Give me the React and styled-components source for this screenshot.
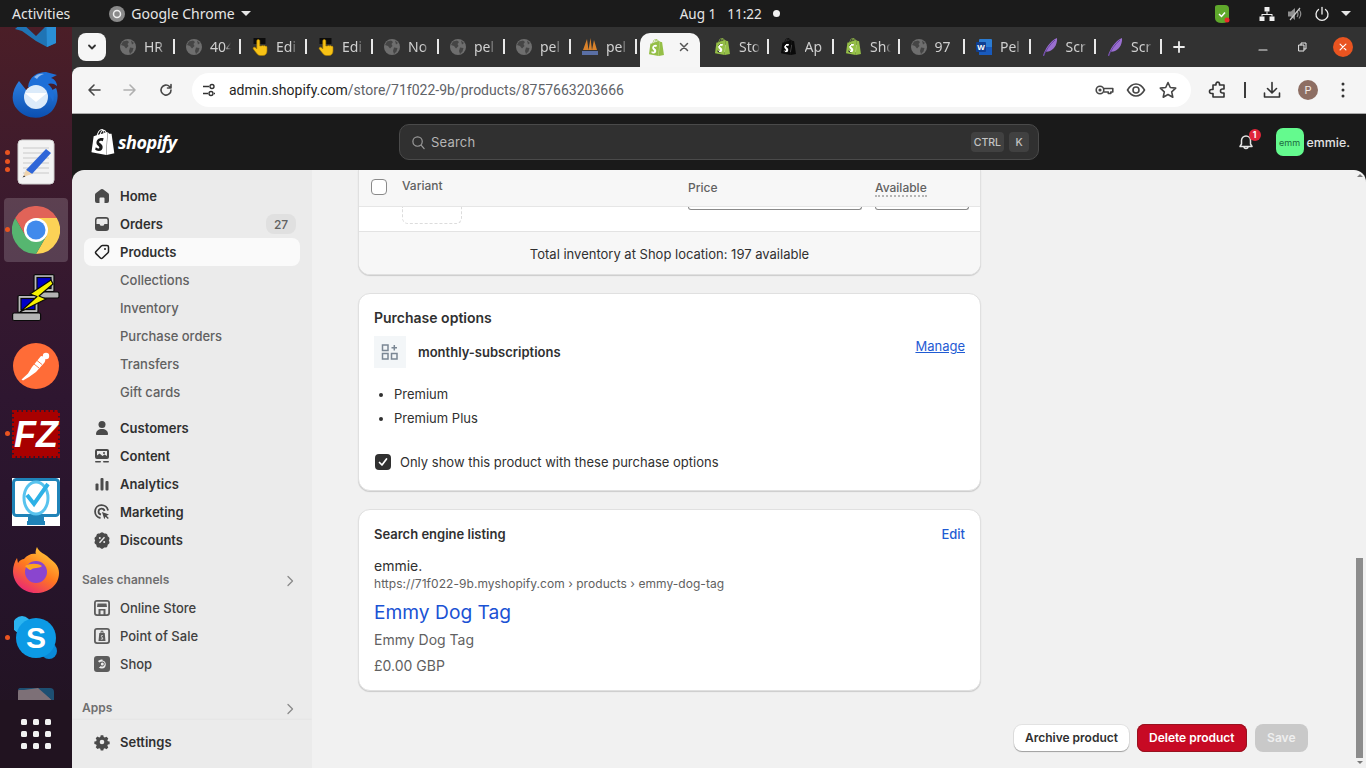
import React from "react";
import styled, { createGlobalStyle } from "styled-components";
import { SiShopify } from "react-icons/si";

const Global = createGlobalStyle`
  html, body { margin: 0; padding: 0; height: 100%; overflow: hidden; background: #1c1c1c; }
  #root { height: 100%; }
  * { box-sizing: border-box; }
`;

const Screen = styled.div`
  width: 1366px; height: 768px; display: flex; flex-direction: column; overflow: hidden;
  font-family: Inter, "Liberation Sans", sans-serif;
`;

/* ---------- GNOME top bar ---------- */
const TopBar = styled.header`
  height: 27px; flex: none; background: #1b1b1b; color: #e6e6e6; display: flex; align-items: center;
  font: 400 14px "Noto Sans", sans-serif; padding-left: 12px;
`;
const AppMenu = styled.div`
  display: flex; align-items: center; gap: 6px; margin-left: 39px;
`;
const Caret = styled.span`
  width: 0; height: 0; border-left: 5px solid transparent; border-right: 5px solid transparent;
  border-top: 5px solid #e6e6e6; margin-left: ${p => p.$ml || 0}px;
`;
const Clock = styled.div`
  margin-left: 429px; width: 100px; display: flex; align-items: center; justify-content: space-between; font-size: 13.5px;
`;
const Tray = styled.div`
  margin-left: auto; display: flex; align-items: center; padding-right: 15px;
`;
const TrayIcon = styled.span`
  display: flex; margin-left: ${p => p.$ml || 0}px;
`;
const ClockDot = styled.span`
  width: 7px; height: 7px; border-radius: 50%; background: #f2f2f2;
`;

/* ---------- Desktop ---------- */
const Desktop = styled.div`
  flex: 1; min-height: 0; display: flex;
`;
const Dock = styled.aside`
  width: 72px; flex: none; position: relative; overflow: hidden;
  background: linear-gradient(180deg, #4b1e27 0%, #3a1a2e 25%, #2e1630 50%, #26142a 75%, #201320 100%);
`;
const DockList = styled.div`
  margin-top: -35px; display: flex; flex-direction: column; align-items: center;
`;
const DockItem = styled.div`
  width: 72px; height: 68px; flex: none; position: relative; display: flex; align-items: center; justify-content: center;
`;
const ActiveTile = styled.span`
  position: absolute; left: 4px; top: 2px; width: 64px; height: 64px; border-radius: 4px; background: rgba(255,255,255,.17);
`;
const RunDot = styled.span`
  position: absolute; left: 5px; top: ${p => p.$top}px; width: 5px; height: 5px; border-radius: 50%; background: #e95420;
`;
const GridButton = styled.div`
  position: absolute; left: 0; bottom: 0; width: 72px; height: 68px; display: grid; grid-template-columns: repeat(3, 6px);
  gap: 6px; justify-content: center; align-content: center; background: #211320;
`;
const GridDot = styled.span`
  width: 6px; height: 6px; border-radius: 1.5px; background: #f2f2f2;
`;

/* ---------- Chrome ---------- */
const Browser = styled.div`
  flex: 1; min-width: 0; display: flex; flex-direction: column; background: #323232;
`;
const TabStrip = styled.div`
  height: 40px; flex: none; display: flex; align-items: flex-end; padding-left: 6px; background: #323232;
`;
const ExpandBtn = styled.div`
  width: 28px; height: 28px; margin-bottom: 6px; background: #f6f6f6; border-radius: 8px; display: flex; align-items: center; justify-content: center;
`;
const TabGroup = styled.div`
  display: flex; margin-left: 3px; align-self: stretch;
`;
const Tab = styled.div`
  width: ${p => p.$w}px; display: flex; align-items: center; padding: 0 0 1px 11px; gap: 8px; position: relative;
  color: #d0d0d0; font: 400 14px "Noto Sans", sans-serif;
  &::after {
    content: ""; position: absolute; right: 0; top: 12px; height: 15px; width: 2px; background: #e8e8e8;
  }
`;
const TabLabel = styled.span`
  width: 21px; overflow: hidden; white-space: nowrap;
  -webkit-mask-image: linear-gradient(90deg, #000 72%, transparent 100%);
  mask-image: linear-gradient(90deg, #000 72%, transparent 100%);
`;
const ActiveTab = styled.div`
  width: 60px; height: 34px; margin-left: 3px; background: #f6f6f6; border-radius: 10px 10px 0 0; display: flex; align-items: center;
  padding: 0 0 6px 8px; gap: 13px;
`;
const TabClose = styled.span`
  display: flex;
`;
const NewTab = styled.div`
  margin: 0 0 14px 11px; display: flex;
`;
const WinControls = styled.div`
  margin-left: auto; display: flex; align-items: center; align-self: center; padding: 0 13px 0 0;
`;
const WinBtn = styled.span`
  display: flex; margin-left: ${p => p.$ml}px;
`;
const WinClose = styled.span`
  width: 20px; height: 20px; margin-left: 26px; border-radius: 50%; background: #e95420; display: flex; align-items: center; justify-content: center;
`;
const Toolbar = styled.div`
  height: 47px; flex: none; background: #f5f5f5; border-radius: 8px 0 0 0; border-bottom: 1px solid #a9a9a9; display: flex; align-items: center; padding-left: 14px;
`;
const NavBtn = styled.span`
  width: 16px; height: 16px; display: flex; margin-right: ${p => p.$mr || 20}px;
`;
const Omnibox = styled.div`
  width: 999px; height: 34px; background: #fff; border-radius: 17px; display: flex; align-items: center; padding: 0 13px 0 9px;
`;
const TuneBtn = styled.span`
  width: 16px; display: flex; margin-right: 12px;
`;
const Url = styled.div`
  flex: 1; font: 400 14px Roboto, sans-serif; color: #5f6368;
`;
const UrlHost = styled.span`
  color: #1f1f1f;
`;
const OmniIcons = styled.div`
  display: flex; gap: 12px; align-items: center;
`;
const ToolIcons = styled.div`
  display: flex; align-items: center; margin-left: 17px;
`;
const ToolIcon = styled.span`
  display: flex; margin-right: ${p => p.$mr}px;
`;
const ToolSep = styled.span`
  width: 2px; height: 16px; background: #3c3c3c; margin-right: 16px;
`;
const ProfileDot = styled.span`
  width: 20px; height: 20px; border-radius: 50%; background: #8d6e63; color: #f3e9e4; font: 400 11px Roboto, sans-serif;
  display: flex; align-items: center; justify-content: center; margin-right: 23px;
`;

/* ---------- Shopify header ---------- */
const ShopHeader = styled.div`
  height: 56px; flex: none; background: #1a1a1a; display: flex; align-items: center; padding: 0 16px 0 18px;
`;
const Logo = styled.div`
  width: 309px; display: flex; align-items: center; gap: 2px; color: #fff; font: italic 700 18px "Open Sans", sans-serif; letter-spacing: -.5px;
`;
const SearchBar = styled.div`
  width: 640px; height: 36px; background: #303030; border: 1px solid #4a4a4a; border-radius: 10px; display: flex; align-items: center;
  padding: 0 9px 0 11px; color: #b5b5b5; font-size: 13px; gap: 5px;
`;
const SearchText = styled.span`
  flex: 1; letter-spacing: .2px;
`;
const Kbd = styled.span`
  height: 20px; padding: 0 3px; min-width: 20px; background: #414141; border-radius: 4px; display: flex; align-items: center; justify-content: center;
  font-size: 10.5px; font-weight: 500; color: #c4c4c4;
`;
const HeaderRight = styled.div`
  margin-left: auto; display: flex; align-items: center;
`;
const Bell = styled.div`
  position: relative; display: flex; margin-right: 21px;
`;
const BellBadge = styled.span`
  position: absolute; right: -6px; top: -4px; width: 12px; height: 12px; border-radius: 50%; background: #e0263a; color: #fff;
  font-size: 8.5px; font-weight: 700; display: flex; align-items: center; justify-content: center;
`;
const Avatar = styled.span`
  width: 28px; height: 28px; border-radius: 7px; background: #64fa8e; color: #1c6b3e; font-size: 9px; display: flex; align-items: center; justify-content: center;
`;
const StoreName = styled.span`
  margin-left: 3px; color: #e3e3e3; font-size: 12.4px; font-weight: 500;
`;

/* ---------- Admin frame ---------- */
const Frame = styled.div`
  flex: 1; min-height: 0; display: flex; background: #1a1a1a;
`;
const Sidebar = styled.nav`
  width: 240px; flex: none; background: #ebebeb; border-radius: 12px 0 0 0; display: flex; flex-direction: column; overflow: hidden;
`;
const NavScroll = styled.div`
  flex: 1; min-height: 0; padding: 12px 12px 0; display: flex; flex-direction: column; overflow: hidden;
`;
const NavFooter = styled.div`
  height: 48px; flex: none; padding: 8px 12px 0; box-shadow: 0 -1px 2px rgba(0,0,0,.03);
`;
const NavItem = styled.div`
  height: 28px; flex: none; display: flex; align-items: center; border-radius: 8px; padding: 0 8px; gap: 8px;
  font-size: 13px; font-weight: ${p => (p.$sub ? 500 : p.$channel ? 550 : 600)};
  color: ${p => (p.$sub ? "#616161" : p.$channel ? "#404040" : "#303030")};
  background: ${p => (p.$active ? "#fafafa" : "transparent")};
  margin-top: ${p => p.$mt || 0}px;
`;
const NavIcon = styled.span`
  width: 20px; height: 20px; flex: none; display: flex; align-items: center; justify-content: center;
`;
const NavLabel = styled.span`
  flex: 1;
`;
const Count = styled.span`
  height: 20px; min-width: 30px; border-radius: 8px; background: #e0e0e0; color: #616161; font-size: 12px; font-weight: 500;
  display: flex; align-items: center; justify-content: center; margin-right: -4px;
`;
const SectionHead = styled.div`
  height: 20px; flex: none; display: flex; align-items: center; justify-content: space-between; margin: ${p => p.$mt}px 0 5px -2px;
  font-size: 12px; font-weight: 600; color: #6f6f6f;
`;
const Chevron = styled.span`
  display: flex; margin: 3px 4px 0 0;
`;

/* ---------- Main column ---------- */
const Main = styled.main`
  flex: 1; min-width: 0; background: #f1f1f1; border-radius: 0 12px 0 0; display: flex; overflow: hidden;
`;
const Column = styled.div`
  flex: 1; min-width: 0; padding-left: 46px; padding-right: 47px; display: flex; flex-direction: column;
`;
const Card = styled.section`
  width: 623px; flex: none; background: #fff; border-radius: ${p => (p.$clipped ? "0 0 12px 12px" : "12px")};
  border: 1px solid #e0e0e0; border-top-width: ${p => (p.$clipped ? 0 : 1)}px;
  box-shadow: 0 1px 1px rgba(0,0,0,.16); margin-top: ${p => p.$mt || 0}px; overflow: hidden;
`;
const TableHead = styled.div`
  height: 37px; background: #f7f7f7; border-bottom: 1px solid #e6e6e6; display: grid; grid-template-columns: 31px 286px 187px 1fr;
  align-items: center; padding-left: 12px; font-size: 12px; font-weight: 500; color: #616161;
`;
const HeadCell = styled.span`
  margin-top: ${p => (p.$up ? -5 : -2)}px;
`;
const DottedCell = styled.span`
  justify-self: start; margin-top: 1px; border-bottom: 2px dotted #b5b5b5; line-height: 14px;
`;
const Check = styled.span`
  width: 16px; height: 16px; border-radius: 4px; border: 1px solid #8a8a8a; background: #fff; display: block; margin-bottom: 2px;
`;
const TableRow = styled.div`
  height: 24px; display: grid; grid-template-columns: 43px 286px 187px 1fr; align-items: start;
`;
const Placeholder = styled.span`
  grid-column: 2; width: 60px; height: 17px; display: block; border: 1px dashed #dcdcdc; border-top: 0; border-radius: 0 0 6px 6px;
`;
const InputStub = styled.span`
  width: ${p => p.$w}px; height: 3px; display: block; border: 1px solid #8a8a8a; border-top: 0; border-radius: 0 0 6px 6px;
`;
const TableFoot = styled.div`
  height: 43px; padding-top: 2px; background: #f7f7f7; border-top: 1px solid #e3e3e3; display: flex; align-items: center; justify-content: center;
  font-size: 13px; font-weight: 400; color: #303030;
`;
const CardBody = styled.div`
  padding: ${p => p.$pt}px 15px 0; height: ${p => p.$h}px;
`;
const CardTitle = styled.h2`
  margin: 0; font-size: 14px; font-weight: 600; line-height: 20px; color: #303030;
`;
const PlanRow = styled.div`
  display: flex; align-items: flex-start; margin-top: 8px;
`;
const PlanThumb = styled.span`
  width: 32px; height: 32px; background: #f3f6f8; display: flex; align-items: center; justify-content: center; flex: none;
`;
const PlanName = styled.span`
  margin: 8px 0 0 12px; flex: 1; font-size: 13px; font-weight: 600; line-height: 16px; color: #303030;
`;
const ManageLink = styled.a`
  font-size: 13px; line-height: 20px; color: #1f5bd3; text-decoration: underline;
`;
const PlanList = styled.ul`
  list-style: disc; margin: 14px 0 0; padding: 0 0 0 20px; font-size: 13px; line-height: 24px; color: #303030;
  li::marker { font-size: 12px; }
`;
const CheckRow = styled.label`
  display: flex; align-items: center; gap: 9px; margin: 22px 0 0 1px; font-size: 13px; line-height: 20px; color: #303030;
`;
const CheckOn = styled.span`
  width: 16px; height: 16px; border-radius: 4px; background: #303030; display: flex; align-items: center; justify-content: center; flex: none;
`;
const ListingHead = styled.div`
  display: flex; justify-content: space-between; align-items: center; height: 20px; font-size: 13px; font-weight: 600; color: #303030;
`;
const EditLink = styled.a`
  font-weight: 450; color: #1f5bd3;
`;
const SiteName = styled.div`
  margin-top: 13px; font-size: 14px; line-height: 18px; color: #303030;
`;
const SiteUrl = styled.div`
  font-size: 12px; line-height: 16px; color: #616161; margin-top: 1px; letter-spacing: .05px;
`;
const SeoTitle = styled.div`
  margin-top: 6px; font-size: 19.2px; line-height: 28px; color: #1a52d4;
`;
const SeoLine = styled.div`
  margin-top: ${p => p.$mt}px; font-size: 14px; line-height: 20px; color: #616161;
`;
const Actions = styled.div`
  display: flex; justify-content: flex-end; align-items: center; gap: 8px; margin-top: 33px;
`;
const Btn = styled.button`
  height: ${p => p.$h}px; padding: 0 ${p => p.$px}px 1px; border-radius: 8px; font: 600 12px Inter, sans-serif; border: 0;
  background: ${p => p.$bg}; color: ${p => p.$fg}; box-shadow: ${p => p.$shadow};
`;
const ScrollTrack = styled.div`
  width: 11px; flex: none; display: flex; flex-direction: column; align-items: flex-start; padding: 4px 0 4px 1px;
`;
const ScrollUp = styled.span`
  width: 0; height: 0; margin-left: 1px; border-left: 3px solid transparent; border-right: 3px solid transparent; border-bottom: 3px solid #7a7a7a;
`;
const ScrollThumb = styled.span`
  width: 7px; height: 200px; margin-top: auto; background: #8c8c8c;
`;
const ScrollDown = styled.span`
  width: 0; height: 0; margin: 3px 0 0 1px; border-left: 3px solid transparent; border-right: 3px solid transparent; border-top: 3px solid #7a7a7a;
`;

/* ---------- Drawings ---------- */
const Globe = () => (
  <svg width="16" height="16" viewBox="0 0 16 16">
    <circle cx="8" cy="8" r="8" fill="#6e6e6e" />
    <path d="M3 2.500 7 1.500 9 3 7.500 5 8.500 7 6 9.500 4 7 1 6ZM10 8.500l3.500.5-1 3.500-2.500 2.500-1-3ZM11 1.500l3 2.500-2 1.500Z" fill="#454545" />
  </svg>
);
const Hand = () => (
  <svg width="16" height="18" viewBox="0 0 16 18">
    <rect x="1.500" y="0" width="12" height="6" fill="#0c0c0c" />
    <path d="M4.800 3c0-2 3-2 3 0v5h1.500c.5-.7 1.600-.7 2 0 .5-.6 1.600-.5 2 .2.800-.3 1.700.2 1.700 1V13c0 2.500-1.500 4.500-4 4.500H8.300c-1.500 0-2.500-.8-3.500-2L1.300 11c-.8-1.200.8-2.500 2-1.500l1.500 1.500Z" fill="#f7c215" stroke="#a97d00" strokeWidth=".6" />
  </svg>
);
const ShopBagWrap = styled.span`
  display: flex; flex: none; width: ${p => p.$size}px; height: ${p => p.$size}px;
  background: radial-gradient(circle at 50% 60%, #fff 0 34%, transparent 36%);
`;
const ShopBag = ({ size = 17, color = "#95bf47" }) => (
  <ShopBagWrap $size={size}>
    <SiShopify size={size} color={color} />
  </ShopBagWrap>
);
const Pari = () => (
  <svg width="16" height="18" viewBox="0 0 16 18">
    <path d="M1 12 5 1l1.500 11ZM6.500 12 8.500 0 10 12ZM10 12 12 2l3 10Z" fill="#d9822b" />
    <rect x="0" y="13" width="16" height="4" fill="#5a6fa5" />
  </svg>
);
const WordIcon = () => (
  <svg width="16" height="16" viewBox="0 0 16 16">
    <rect x="3" y="0" width="13" height="16" rx="1" fill="#2b7cd3" />
    <rect x="3" y="8" width="13" height="8" fill="#185abd" />
    <rect x="0" y="3" width="10" height="10" rx="1" fill="#103f91" />
    <text x="5" y="11" textAnchor="middle" fontSize="8" fontWeight="700" fill="#fff" fontFamily="Liberation Sans">W</text>
  </svg>
);
const Quill = () => (
  <svg width="16" height="20" viewBox="0 0 16 20">
    <path d="M1 19C3 12 8 4 15 1c.5 5-2 11-7 13-1.500.6-3 .8-4.500.6L2 19Z" fill="#9a6fd0" />
    <path d="M1.500 19C4 13 8 7 13 3" stroke="#5d3a99" strokeWidth=".8" fill="none" />
  </svg>
);

const VsCode = () => (
  <svg width="44" height="48" viewBox="0 0 44 48">
    <path d="M1 27 8 21 22 34 32 24V7l10 4v30l-9 4-11-6L8 29Z" fill="#1f74b5" />
    <path d="M32 7l10 4v30l-9 4Z" fill="#2a8fd6" />
  </svg>
);
const Thunderbird = () => (
  <svg width="50" height="50" viewBox="0 0 50 50">
    <defs>
      <linearGradient id="tb" x1="0" y1="0" x2="0" y2="1"><stop offset="0" stopColor="#2c7fe0" /><stop offset="1" stopColor="#0b4fb0" /></linearGradient>
    </defs>
    <path d="M8 12c-7 9-9 20-2 28 8 10 24 12 34 3 7-7 8-17 5-24L34 25 16 22Z" fill="url(#tb)" />
    <path d="M17 18c1-10 9-15 18-15l11 3-6 3c4 1 6 5 6 8-3-3-7-3-9-2 6 5 7 12 5 18-3-8-7-9-12-11Z" fill="#1d6fd8" />
    <path d="M23 8c3-3 7-4 10-3-3 1-5 2-7 5Z" fill="#8bb8f0" />
    <circle cx="25" cy="28" r="12" fill="#dcebfa" />
    <path d="M14 24h22l-11 9Z" fill="#fff" />
  </svg>
);
const Gedit = () => (
  <svg width="38" height="46" viewBox="0 0 38 46">
    <rect x="1" y="1" width="36" height="44" rx="4" fill="#f3f3f3" stroke="#cfcfcf" />
    <path d="M6 9h26M6 14h26M6 19h26M6 24h26M6 29h26M6 34h26" stroke="#c9c9c9" strokeWidth="1" />
    <path d="M29 10l5 4-19 21-6-4Z" fill="#2f66d8" />
    <path d="M9 31l6 4-9 3Z" fill="#eed3ad" />
    <path d="M7 36.500l1.500 1-3 1Z" fill="#333" />
  </svg>
);
const Chrome = () => (
  <svg width="48" height="48" viewBox="0 0 48 48">
    <path d="M3.200 12A24 24 0 0 1 44.800 12H24L13.600 30Z" fill="#db4437" />
    <path d="M44.800 12A24 24 0 0 1 24 48L34.400 30 24 12Z" fill="#fcc934" />
    <path d="M24 48A24 24 0 0 1 3.200 12L13.600 30H34.400Z" fill="#34a853" />
    <circle cx="24" cy="24" r="12" fill="#fff" />
    <circle cx="24" cy="24" r="9.500" fill="#1a73e8" />
  </svg>
);
const Putty = () => (
  <svg width="48" height="48" viewBox="0 0 48 48">
    <g stroke="#0a0a0a" strokeWidth="1.200">
      <rect x="22" y="0.600" width="20" height="17" rx="1" fill="#b9b9b9" />
      <rect x="25" y="3.500" width="14" height="11" fill="#0000c8" />
      <rect x="21" y="18" width="26" height="6" rx="1.500" fill="#b4b4b4" />
      <rect x="6" y="21.500" width="20" height="17" rx="1" fill="#b9b9b9" />
      <rect x="9" y="24.500" width="14" height="11" fill="#0000c8" />
      <rect x="0.600" y="39" width="28" height="7.500" rx="1.500" fill="#b4b4b4" />
    </g>
    <path d="M39 6 18 20l7 2.500L8 38l26-13-7-3 14-12Z" fill="#f6f000" stroke="#0a0a0a" strokeWidth="1.200" strokeLinejoin="round" />
  </svg>
);
const Postman = () => (
  <svg width="46" height="46" viewBox="0 0 46 46">
    <circle cx="23" cy="23" r="23" fill="#ff6c37" />
    <circle cx="33" cy="13" r="3.200" fill="#fff" />
    <path d="M28 13c4 0 5.500 3.500 3.500 6.500L23 29l-7 5-6 3.500-1.500-1 6.500-6 4-6.500Z" fill="#fff" />
    <path d="M24 17.500l5 4M21 21l5 4" stroke="#ff6c37" strokeWidth=".9" />
  </svg>
);
const FileZilla = () => (
  <svg width="48" height="48" viewBox="0 0 48 48">
    <rect x="2" y="2" width="44" height="44" fill="#a80000" stroke="#a80000" strokeWidth="4" strokeDasharray="3 1.500" />
    <text x="24" y="37" textAnchor="middle" fontFamily="Liberation Sans" fontStyle="italic" fontWeight="700" fontSize="36" fill="#fff">FZ</text>
  </svg>
);
const Monitor = () => (
  <svg width="48" height="48" viewBox="0 0 48 48">
    <rect width="48" height="48" fill="#fff" />
    <rect x="1.500" y="1.500" width="45" height="36" rx="3" fill="none" stroke="#1f83b8" strokeWidth="3" />
    <rect x="16" y="38" width="16" height="5" fill="#1f83b8" />
    <rect x="15" y="43" width="18" height="4" fill="#1f83b8" />
    <ellipse cx="24" cy="20" rx="12" ry="16" fill="none" stroke="#58c3ee" strokeWidth="3" />
    <path d="M15 17l7 9L36 6" fill="none" stroke="#2db1e6" strokeWidth="4" />
  </svg>
);
const Firefox = () => (
  <svg width="46" height="46" viewBox="0 0 46 46">
    <defs>
      <linearGradient id="ff" x1="0.800" y1="0" x2="0.200" y2="1"><stop offset="0" stopColor="#ffd23d" /><stop offset=".5" stopColor="#ff7a1e" /><stop offset="1" stopColor="#e9217b" /></linearGradient>
    </defs>
    <path d="M23 46C10 46 0 36 0 24c0-5 2-10 4-13l1 5c2-3 4-4 6-4 3-4 8-6 12-5-1-1 0-5 1-7 2 5 6 6 10 9 2 2 5 4 8 7 3 3 4 7 4 10 0 12-10 20-23 20Z" fill="url(#ff)" />
    <circle cx="23" cy="25" r="11" fill="#8a45cf" />
    <path d="M12 19c5-3 13-3 17 0-3 3-9 1-11 4-2 0-4-2-6-4Z" fill="#ffa51e" />
  </svg>
);
const Skype = () => (
  <svg width="44" height="44" viewBox="0 0 44 44">
    <circle cx="8" cy="9" r="9" fill="#2bb4f0" />
    <circle cx="35" cy="35" r="8" fill="#0a8ad8" />
    <circle cx="22" cy="22" r="20" fill="#0c9ae5" />
    <text x="22" y="32" textAnchor="middle" fontFamily="Liberation Sans" fontWeight="700" fontSize="30" fill="#fff">S</text>
  </svg>
);
const Files = () => (
  <svg width="36" height="48" viewBox="0 0 36 48">
    <path d="M0 10Q0 6 4 6H22L36 20H0Z" fill="#7d7077" />
    <path d="M0 8Q0 6 3 6H20L6 8Z" fill="#1d4f72" />
    <path d="M20 6h12q4 0 4 4v10Z" fill="#1d4f72" />
  </svg>
);
const Line = ({ d, size = 16, w = 1.6, c = "#444", vb = 16 }) => (
  <svg width={size} height={size} viewBox={`0 0 ${vb} ${vb}`} fill="none" stroke={c} strokeWidth={w} strokeLinecap="round" strokeLinejoin="round"><path d={d} /></svg>
);

const I = ({ children, fill = "#4a4a4a" }) => <svg width="20" height="20" viewBox="0 0 20 20" fill={fill}>{children}</svg>;
const icons = {
  home: <I><path d="M9 3.300a1.600 1.600 0 0 1 2 0l5 3.700c.6.400 1 1.100 1 1.800V15a2 2 0 0 1-2 2h-2.500v-4.500a1 1 0 0 0-1-1h-3a1 1 0 0 0-1 1V17H5a2 2 0 0 1-2-2V8.800c0-.7.400-1.400 1-1.800Z" /></I>,
  orders: <I><path fillRule="evenodd" d="M6 3h8a3 3 0 0 1 3 3v8a3 3 0 0 1-3 3H6a3 3 0 0 1-3-3V6a3 3 0 0 1 3-3Zm-1.500 3.300v3.700H7c.6 0 1 .4 1.200 1l.3.800h3l.3-.8c.2-.6.600-1 1.200-1h2.500V6.300c0-.8-.7-1.500-1.500-1.500H6c-.8 0-1.500.7-1.500 1.500Z" /></I>,
  products: <I><g fill="none" stroke="#1f1f1f" strokeWidth="1.500" strokeLinejoin="round"><path d="M10.500 3.500h4.500a1.500 1.500 0 0 1 1.500 1.500v4.500c0 .5-.2.900-.5 1.200l-5.500 5.300a1.500 1.500 0 0 1-2.100 0l-4.400-4.400a1.500 1.500 0 0 1 0-2.100l5.300-5.500c.3-.3.700-.5 1.200-.5Z" /></g><circle cx="13" cy="7" r="1" fill="#1f1f1f" /></I>,
  customers: <I><circle cx="10" cy="6.500" r="3.500" /><path d="M4 16c0-3 2.500-5 6-5s6 2 6 5c0 .6-.5 1-1 1H5c-.5 0-1-.4-1-1Z" /></I>,
  content: <I><path fillRule="evenodd" d="M5 3h10a2 2 0 0 1 2 2v6a2 2 0 0 1-2 2H5a2 2 0 0 1-2-2V5a2 2 0 0 1 2-2Zm0 2v4.500l2.500-2 3 2.500 2-1.500L15 10V5Zm7 1a1 1 0 1 0 0 2 1 1 0 0 0 0-2Z" /><rect x="3" y="15" width="6" height="1.600" rx=".8" /><rect x="11" y="15" width="6" height="1.600" rx=".8" /></I>,
  analytics: <I><rect x="3.500" y="9.500" width="3" height="7" rx="1" /><rect x="8.500" y="4" width="3" height="12.500" rx="1" /><rect x="13.500" y="7" width="3" height="9.500" rx="1" /></I>,
  marketing: <I><path fill="none" stroke="#4a4a4a" strokeWidth="1.800" d="M16 8.500A6.500 6.500 0 1 0 8.500 16" /><path fill="none" stroke="#4a4a4a" strokeWidth="1.800" d="M12.500 9A3 3 0 1 0 9 12.500" /><path d="M10 10l7 2.500-2.500 1.200 2.300 2.300-1 1-2.300-2.300-1.200 2.500Z" /></I>,
  discounts: <I><path fillRule="evenodd" d="M8.700 2.700a2 2 0 0 1 2.600 0l.9.8 1.200-.1a2 2 0 0 1 2.100 1.600l.2 1.200 1 .7a2 2 0 0 1 .6 2.500l-.5 1.100.5 1.100a2 2 0 0 1-.6 2.500l-1 .7-.2 1.200a2 2 0 0 1-2.100 1.600l-1.200-.1-.9.8a2 2 0 0 1-2.600 0l-.9-.8-1.200.1a2 2 0 0 1-2.100-1.600l-.2-1.200-1-.7a2 2 0 0 1-.6-2.500l.5-1.100-.5-1.100a2 2 0 0 1 .6-2.500l1-.7.2-1.200a2 2 0 0 1 2.100-1.600l1.200.1ZM12 6.800l-5 5.500 1 .9 5-5.500ZM7.800 7a1 1 0 1 0 0 2 1 1 0 0 0 0-2Zm4.400 4a1 1 0 1 0 0 2 1 1 0 0 0 0-2Z" /></I>,
  store: <I fill="#5c5c5c"><path fillRule="evenodd" d="M5 2h10a3 3 0 0 1 3 3v10a3 3 0 0 1-3 3H5a3 3 0 0 1-3-3V5a3 3 0 0 1 3-3Zm0 1.800c-.7 0-1.200.5-1.200 1.200v10c0 .7.500 1.200 1.200 1.200h1.500V11h7v5.200H15c.7 0 1.200-.5 1.200-1.200V5c0-.7-.5-1.200-1.200-1.200ZM5.500 5.500h9l.5 3.500H5Zm3 7v3.700h3v-3.700Z" /></I>,
  pos: <I fill="#5c5c5c"><path fillRule="evenodd" d="M5 2h10a3 3 0 0 1 3 3v10a3 3 0 0 1-3 3H5a3 3 0 0 1-3-3V5a3 3 0 0 1 3-3Zm0 1.800c-.7 0-1.200.5-1.200 1.200v10c0 .7.500 1.200 1.200 1.200h10c.7 0 1.200-.5 1.200-1.200V5c0-.7-.5-1.200-1.200-1.200Z" /><path fillRule="evenodd" d="M7.300 7H8.500V6.200c0-.9.700-1.700 1.500-1.700s1.500.8 1.500 1.700V7h1.200l.8 8H6.500Zm2.200 0h1V6.200c0-.3-.2-.7-.5-.7s-.5.400-.5.700Zm1.500 2.300c-1-.3-2.200.2-2.200 1.200s1.700 1 1.700 1.800c0 .5-.8.600-1.500.2l-.3.800c1 .5 2.500.2 2.500-1 0-1.200-1.700-1.100-1.700-1.900 0-.4.700-.5 1.300-.3Z" /></I>,
  shop: <I fill="#5c5c5c"><path fillRule="evenodd" d="M5 2h10a3 3 0 0 1 3 3v10a3 3 0 0 1-3 3H5a3 3 0 0 1-3-3V5a3 3 0 0 1 3-3Zm5.500 3.500c-2 0-3.500.6-4.500 1.500l1.200 1.500c.8-.7 2-1 3-1a2.500 2.500 0 1 1-1.500 4.500c-.5.800-1.200 1.400-2 1.600.9.700 2 1 3.300 1a4.100 4.100 0 0 0 .5-8.100Zm-.2 3a1.500 1.500 0 1 0 0 3 1.500 1.500 0 0 0 0-3Z" /></I>,
  settings: <I><path fillRule="evenodd" d="M8.500 2.500h3l.5 2.200 1.300.6 2-1.100 2.100 2.100-1.100 2 .6 1.300 2.100.4v3l-2.100.5-.6 1.300 1.100 2-2.100 2.100-2-1.100-1.300.6-.5 2.100h-3L8 18.300l-1.300-.6-2 1.100-2.100-2.100 1.100-2-.6-1.300-2.100-.5v-3l2.100-.4.600-1.300-1.100-2 2.100-2.100 2 1.100L8 4.700Z" transform="translate(1.500 1.100) scale(.85)" /><circle cx="10" cy="10" r="2.300" fill="#ebebeb" /></I>,
};

const Nav = ({ icon, label, sub, active, channel, count, mt }) => (
  <NavItem $sub={sub} $active={active} $channel={channel} $mt={mt}>
    <NavIcon>{icon && icons[icon]}</NavIcon>
    <NavLabel>{label}</NavLabel>
    {count && <Count>{count}</Count>}
  </NavItem>
);

const leftTabs = [[<Globe />, "HR"], [<Globe />, "404"], [<Hand />, "Edi"], [<Hand />, "Edi"], [<Globe />, "No"], [<Globe />, "pel"], [<Globe />, "pel"], [<Pari />, "pel"]];
const rightTabs = [[<ShopBag />, "Sto"], [<ShopBag color="#0a0a0a" />, "Ap"], [<ShopBag />, "Sho"], [<Globe />, "97"], [<WordIcon />, "Pel"], [<Quill />, "Scr"], [<Quill />, "Scr"]];

const dock = [
  [<VsCode />],
  [<Thunderbird />],
  [<Gedit />, [50, 59, 67]],
  [<Chrome />, [59], true],
  [<Putty />],
  [<Postman />],
  [<FileZilla />, [59]],
  [<Monitor />],
  [<Firefox />],
  [<Skype />, [59]],
  [<Files />],
];

const CrossMark = ({ s = 12, c = "#444", w = 1.500 }) => <Line size={s} c={c} w={w} vb={12} d="M2.500 2.500l7 7M9.500 2.500l-7 7" />;
const SmallChevron = () => <Chevron><Line size={12} vb={12} c="#8a8a8a" w={1.300} d="M4 1.500 8.500 6 4 10.500" /></Chevron>;

export default function App() {
  return (
    <>
      <Global />
      <Screen>
        <TopBar>
          <span>Activities</span>
          <AppMenu>
            <svg width="16" height="16" viewBox="0 0 16 16"><circle cx="8" cy="8" r="8" fill="#8a8a8a" /><circle cx="8" cy="8" r="3.500" fill="none" stroke="#f0f0f0" strokeWidth="1.500" /></svg>
            <span>Google Chrome</span>
            <Caret />
          </AppMenu>
          <Clock>
            <span>Aug 1</span><span>11:22</span><ClockDot />
          </Clock>
          <Tray>
            <TrayIcon>
              <svg width="16" height="20" viewBox="0 0 16 20"><path d="M1 3q0-2 3-2h7q4 0 4 4v9q0 5-7 5-7 0-7-5Z" fill="#5fa82b" /><path d="M5 10l2.500 2.500L11 8.500" fill="none" stroke="#fff" strokeWidth="1.500" /><circle cx="13" cy="16" r="2.500" fill="#e82b2b" /></svg>
            </TrayIcon>
            <TrayIcon $ml={29}>
              <svg width="16" height="16" viewBox="0 0 16 16" fill="#f0f0f0"><rect x="5.500" y="1" width="5" height="4.500" /><rect x="0.500" y="10.500" width="5" height="4.500" /><rect x="10.500" y="10.500" width="5" height="4.500" /><path d="M7.500 5.500h1V8H13.500v2.500h-1V9h-9v1.500h-1V8h5Z" /></svg>
            </TrayIcon>
            <TrayIcon $ml={12}>
              <svg width="16" height="16" viewBox="0 0 16 16" fill="none"><path d="M1 5.500h3L8 2v12L4 10.500H1Z" fill="#8e8e8e" /><path d="M10 5q2 3 0 6M12 3.500q3.500 4.500 0 9" stroke="#8e8e8e" strokeWidth="1.200" /><path d="M3 14 13 2" stroke="#c9c9c9" strokeWidth="1.200" /></svg>
            </TrayIcon>
            <TrayIcon $ml={11}>
              <svg width="16" height="16" viewBox="0 0 16 16" fill="none" stroke="#f0f0f0" strokeWidth="1.300" strokeLinecap="round"><path d="M8 1.500v6.500" /><path d="M4.500 3.500a6 6 0 1 0 7 0" /></svg>
            </TrayIcon>
            <Caret $ml={11} />
          </Tray>
        </TopBar>

        <Desktop>
          <Dock>
            <DockList>
              {dock.map(([icon, dots, active], i) => (
                <DockItem key={i}>
                  {active && <ActiveTile />}
                  {icon}
                  {dots && dots.map(t => <RunDot key={t} $top={t - 28} />)}
                </DockItem>
              ))}
            </DockList>
            <GridButton>
              {Array.from({ length: 9 }).map((_, i) => <GridDot key={i} />)}
            </GridButton>
          </Dock>

          <Browser>
            <TabStrip>
              <ExpandBtn><Line size={12} vb={12} w={1.800} c="#333" d="M3 4.500l3 3 3-3" /></ExpandBtn>
              <TabGroup>
                {leftTabs.map(([ic, t], i) => (
                  <Tab key={i} $w={66}>{ic}<TabLabel>{t}</TabLabel></Tab>
                ))}
              </TabGroup>
              <ActiveTab>
                <ShopBag />
                <TabClose><CrossMark s={12} c="#555" /></TabClose>
              </ActiveTab>
              <TabGroup>
                {rightTabs.map(([ic, t], i) => (
                  <Tab key={i} $w={65.500}>{ic}<TabLabel>{t}</TabLabel></Tab>
                ))}
              </TabGroup>
              <NewTab><Line size={12} vb={12} c="#eeeeee" w={1.800} d="M6 1v10M1 6h10" /></NewTab>
              <WinControls>
                <WinBtn $ml={0}><Line size={10} vb={10} c="#e8e8e8" w={1.200} d="M1 8h8" /></WinBtn>
                <WinBtn $ml={29}><Line size={10} vb={10} c="#e8e8e8" w={1} d="M2 3h5v6H2ZM4 3V1h5v6H7" /></WinBtn>
                <WinClose><CrossMark s={10} c="#fff" w={1.400} /></WinClose>
              </WinControls>
            </TabStrip>

            <Toolbar>
              <NavBtn><Line d="M14 8H3M8 3 3 8l5 5" c="#474747" /></NavBtn>
              <NavBtn><Line d="M2 8h11M8 3l5 5-5 5" c="#b0b0b0" /></NavBtn>
              <NavBtn $mr={18}><Line d="M13 8a5 5 0 1 1-1.500-3.500L13 6M13 2.500V6H9.500" c="#474747" /></NavBtn>
              <Omnibox>
                <TuneBtn>
                  <svg width="16" height="16" viewBox="0 0 16 16" fill="none" stroke="#333" strokeWidth="1.400"><path d="M2 4.500h6M13 11.500h1M2 11.500h5" /><circle cx="11" cy="4.500" r="2" /><circle cx="10" cy="11.500" r="2" /></svg>
                </TuneBtn>
                <Url><UrlHost>admin.shopify.com</UrlHost>/store/71f022-9b/products/8757663203666</Url>
                <OmniIcons>
                  <svg width="20" height="20" viewBox="0 0 20 20" fill="none" stroke="#474747" strokeWidth="1.600" strokeLinejoin="round"><circle cx="6" cy="10" r="3.800" /><path d="M9.800 8.500h9v3.500h-2v1.500h-2.500V12H9.800" /><circle cx="6" cy="10" r=".8" /></svg>
                  <Line size={20} vb={20} c="#474747" d="M1.500 10S5 4 10 4s8.500 6 8.500 6-3.500 6-8.500 6-8.500-6-8.500-6ZM10 7a3 3 0 1 0 0 6 3 3 0 0 0 0-6Z" />
                  <Line size={20} vb={20} c="#474747" d="M10 2.500l2.300 5 5.400.6-4 3.700 1.100 5.400L10 14.500l-4.800 2.700 1.100-5.400-4-3.700 5.400-.6Z" />
                </OmniIcons>
              </Omnibox>
              <ToolIcons>
                <ToolIcon $mr={16}><Line size={20} vb={20} c="#333" d="M8 3.500a1.800 1.800 0 0 1 3.500 0V5H16v4h-1.500a2 2 0 0 0 0 4H16v4H5v-3.500H3.500a2 2 0 0 1 0-4H5V5h3Z" /></ToolIcon>
                <ToolSep />
                <ToolIcon $mr={16}><Line size={20} vb={20} c="#333" d="M10 2.500v10M5.500 8.500l4.500 4.500 4.500-4.500M2.500 13v4h15v-4" /></ToolIcon>
                <ProfileDot>P</ProfileDot>
                <svg width="4" height="16" viewBox="0 0 4 16" fill="#333"><circle cx="2" cy="2" r="1.500" /><circle cx="2" cy="8" r="1.500" /><circle cx="2" cy="14" r="1.500" /></svg>
              </ToolIcons>
            </Toolbar>

            <ShopHeader>
              <Logo><SiShopify size={26} color="#fff" /><span>shopify</span></Logo>
              <SearchBar>
                <Line size={15} vb={16} c="#9a9a9a" w={1.300} d="M7 2a5 5 0 1 0 0 10 5 5 0 0 0 0-10ZM11 11l3 3.500" />
                <SearchText>Search</SearchText>
                <Kbd>CTRL</Kbd>
                <Kbd>K</Kbd>
              </SearchBar>
              <HeaderRight>
                <Bell>
                  <Line size={18} vb={18} c="#e3e3e3" w={1.500} d="M3 13.500h12l-1.500-2.500V7.500a4.500 4.500 0 0 0-9 0V11ZM7 13.500a2 2 0 0 0 4 0" />
                  <BellBadge>1</BellBadge>
                </Bell>
                <Avatar>emm</Avatar>
                <StoreName>emmie.</StoreName>
              </HeaderRight>
            </ShopHeader>

            <Frame>
              <Sidebar>
                <NavScroll>
                  <Nav icon="home" label="Home" />
                  <Nav icon="orders" label="Orders" count="27" />
                  <Nav icon="products" label="Products" active />
                  <Nav sub label="Collections" />
                  <Nav sub label="Inventory" />
                  <Nav sub label="Purchase orders" />
                  <Nav sub label="Transfers" />
                  <Nav sub label="Gift cards" />
                  <Nav icon="customers" label="Customers" mt={8} />
                  <Nav icon="content" label="Content" />
                  <Nav icon="analytics" label="Analytics" />
                  <Nav icon="marketing" label="Marketing" />
                  <Nav icon="discounts" label="Discounts" />
                  <SectionHead $mt={15}>
                    <span>Sales channels</span>
                    <SmallChevron />
                  </SectionHead>
                  <Nav channel icon="store" label="Online Store" />
                  <Nav channel icon="pos" label="Point of Sale" />
                  <Nav channel icon="shop" label="Shop" />
                  <SectionHead $mt={19}>
                    <span>Apps</span>
                    <SmallChevron />
                  </SectionHead>
                </NavScroll>
                <NavFooter>
                  <Nav icon="settings" label="Settings" />
                </NavFooter>
              </Sidebar>

              <Main>
                <Column>
                  <Card $clipped>
                    <TableHead>
                      <Check />
                      <HeadCell $up>Variant</HeadCell>
                      <HeadCell>Price</HeadCell>
                      <DottedCell>Available</DottedCell>
                    </TableHead>
                    <TableRow>
                      <Placeholder />
                      <InputStub $w={174} />
                      <InputStub $w={94} />
                    </TableRow>
                    <TableFoot>Total inventory at Shop location: 197 available</TableFoot>
                  </Card>

                  <Card $mt={18}>
                    <CardBody $pt={14} $h={196}>
                      <CardTitle>Purchase options</CardTitle>
                      <PlanRow>
                        <PlanThumb>
                          <svg width="18" height="18" viewBox="0 0 18 18" fill="none" stroke="#7b8794" strokeWidth="1.500"><rect x="1.500" y="2" width="5.500" height="5.500" /><rect x="1.500" y="10.500" width="5.500" height="5.500" /><rect x="10.500" y="10.500" width="5.500" height="5.500" /><path d="M13.300 2v5.500M10.500 4.800H16" /></svg>
                        </PlanThumb>
                        <PlanName>monthly-subscriptions</PlanName>
                        <ManageLink>Manage</ManageLink>
                      </PlanRow>
                      <PlanList>
                        <li>Premium</li>
                        <li>Premium Plus</li>
                      </PlanList>
                      <CheckRow>
                        <CheckOn><Line size={12} vb={12} c="#fff" w={1.700} d="M2.500 6.500l2.500 2.500 4.500-6" /></CheckOn>
                        Only show this product with these purchase options
                      </CheckRow>
                    </CardBody>
                  </Card>

                  <Card $mt={18}>
                    <CardBody $pt={14} $h={180}>
                      <ListingHead>
                        <span>Search engine listing</span>
                        <EditLink>Edit</EditLink>
                      </ListingHead>
                      <SiteName>emmie.</SiteName>
                      <SiteUrl>https://71f022-9b.myshopify.com › products › emmy-dog-tag</SiteUrl>
                      <SeoTitle>Emmy Dog Tag</SeoTitle>
                      <SeoLine $mt={4}>Emmy Dog Tag</SeoLine>
                      <SeoLine $mt={6}>£0.00 GBP</SeoLine>
                    </CardBody>
                  </Card>

                  <Actions>
                    <Btn $h={26} $px={11} $bg="#fff" $fg="#303030" $shadow="0 1px 1px rgba(0,0,0,.3), 0 0 0 1px rgba(0,0,0,.06)">Archive product</Btn>
                    <Btn $h={28} $px={12} $bg="#c70a24" $fg="#fff" $shadow="inset 0 0 0 1px #98121f">Delete product</Btn>
                    <Btn $h={28} $px={12.500} $bg="#c9c9c9" $fg="#efefef" $shadow="none">Save</Btn>
                  </Actions>
                </Column>
                <ScrollTrack>
                  <ScrollUp />
                  <ScrollThumb />
                  <ScrollDown />
                </ScrollTrack>
              </Main>
            </Frame>
          </Browser>
        </Desktop>
      </Screen>
    </>
  );
}
